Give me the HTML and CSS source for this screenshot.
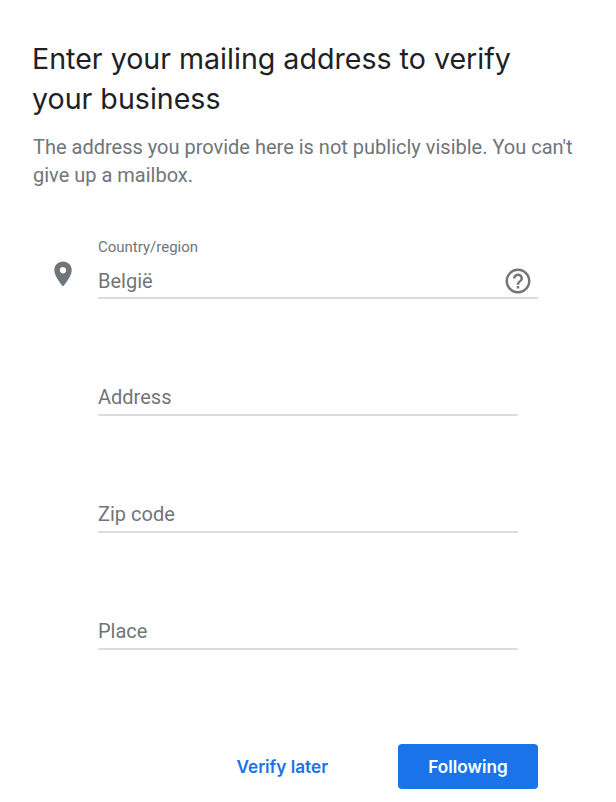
FILE: index.html
```html
<!DOCTYPE html>
<html lang="en">
<head>
    <meta charset="UTF-8">
    <title>Enter your mailing address</title>
    <link rel="stylesheet" href="styles.css">
</head>
<body>
    <div class="container">
        <h1>Enter your mailing address to verify your business</h1>
        <p class="intro">The address you provide here is not publicly visible. You can't give up a mailbox.</p>

        <div class="form">
            <div class="field-row">
                <svg class="pin" width="30" height="30" viewBox="0 0 24 24">
                    <path fill="#70757a" d="M12 2C8.13 2 5 5.13 5 9c0 5.25 7 13 7 13s7-7.75 7-13c0-3.87-3.13-7-7-7zm0 9.5a2.5 2.5 0 1 1 0-5 2.5 2.5 0 0 1 0 5z"/>
                </svg>
                <div class="field field-wide">
                    <label class="small-label">Country/region</label>
                    <div class="value-row">
                        <span class="value">België</span>
                        <svg class="help" width="30" height="30" viewBox="0 0 24 24">
                            <path fill="#757575" d="M11 18h2v-2h-2v2zm1-16C6.48 2 2 6.48 2 12s4.48 10 10 10 10-4.48 10-10S17.52 2 12 2zm0 18c-4.41 0-8-3.59-8-8s3.59-8 8-8 8 3.59 8 8-3.59 8-8 8zm0-14c-2.21 0-4 1.79-4 4h2c0-1.1.9-2 2-2s2 .9 2 2c0 2-3 1.75-3 5h2c0-2.25 3-2.5 3-5 0-2.21-1.79-4-4-4z"/>
                        </svg>
                    </div>
                </div>
            </div>
            <div class="field field-plain"><span class="value">Address</span></div>
            <div class="field field-plain"><span class="value">Zip code</span></div>
            <div class="field field-plain"><span class="value">Place</span></div>
        </div>

        <div class="actions">
            <button class="btn-link">Verify later</button>
            <button class="btn-primary">Following</button>
        </div>
    </div>
</body>
</html>
```

FILE: styles.css
```css
body {
    margin: 0;
    background: #fff;
    font-family: Roboto, Arial, sans-serif;
}
.container {
    padding: 39px 40px 0 33px;
    width: 543px;
}
h1 {
    margin: 0 0 0 -1px;
    font-family: Inter, Arial, sans-serif;
    font-size: 28.6px;
    font-weight: 400;
    line-height: 40px;
    color: #202124;
}
.intro {
    margin: 14px 0 0;
    font-size: 20px;
    line-height: 28px;
    color: #70757a;
    width: 545px;
}
.form {
    margin-top: 48px;
}
.field-row {
    display: flex;
    align-items: flex-start;
}
.pin {
    margin: 22px 0 0 15px;
    flex: none;
}
.field {
    border-bottom: 2px solid #dadce0;
}
.field-wide {
    width: 440px;
    margin-left: 20px;
}
.field-plain {
    width: 420px;
    margin: 0 0 0 65px;
    height: 32px;
    padding-top: 83px;
}
.small-label {
    display: block;
    font-size: 15px;
    line-height: 20px;
    margin-bottom: 8px;
    color: #70757a;
}
.value-row {
    display: flex;
    justify-content: space-between;
    align-items: center;
    height: 32px;
}
.help {
    margin-right: 5px;
}
.value {
    font-size: 20px;
    line-height: 30px;
    color: #70757a;
}
.actions {
    display: flex;
    justify-content: flex-end;
    align-items: center;
    margin: 94px 0 0;
    gap: 40px;
    width: 505px;
}
button {
    font-family: Inter, Arial, sans-serif;
    font-size: 17.2px;
    font-weight: 600;
    border: none;
    border-radius: 4px;
    height: 45px;
    cursor: pointer;
}
.btn-link {
    background: none;
    color: #1a73e8;
    padding: 0 30px;
}
.btn-primary {
    background: #1a73e8;
    color: #fff;
    width: 140px;
}
```
